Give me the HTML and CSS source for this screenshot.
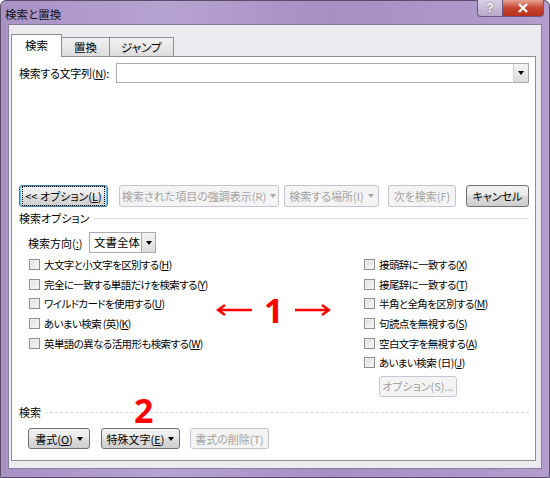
FILE: index.html
```html
<!DOCTYPE html>
<html lang="ja">
<head>
<meta charset="utf-8">
<link rel="stylesheet" href="styles.css">
</head>
<body>
<div class="window">
  <div class="titlebar">
    <span class="title">検索と置換</span>
    <div class="caps">
      <span class="cap help">?</span>
      <span class="cap close">
        <svg width="14" height="10" viewBox="0 0 14 10"><path d="M3 1 L11 9 M11 1 L3 9" stroke="#fff" stroke-width="2.4" fill="none"/></svg>
      </span>
    </div>
  </div>
  <div class="client">
    <div class="tabs">
      <span class="tab active">検索</span>
      <span class="tab">置換</span>
      <span class="tab">ジャンプ</span>
    </div>
    <div class="panel">
      <div class="find-row">
        <label class="find-label">検索する文字列(<u>N</u>):</label>
        <div class="combo">
          <span class="combo-text"></span>
          <span class="drop"><i class="tri"></i></span>
        </div>
      </div>
      <div class="btn-row">
        <span class="btn default w-opt"><span class="focus">&lt;&lt; オプション(<u>L</u>)</span></span>
        <span class="btn dis w-hl"><span>検索された項目の強調表示(R)</span><i class="tri gray"></i></span>
        <span class="btn dis w-where"><span>検索する場所(I)</span><i class="tri gray"></i></span>
        <span class="btn dis w-next"><span>次を検索(F)</span></span>
        <span class="btn w-cancel"><span>キャンセル</span></span>
      </div>
      <div class="group-head"><span>検索オプション</span><span class="line solid"></span></div>
      <div class="dir-row">
        <span class="dir-label">検索方向(<u>:</u>)</span>
        <div class="select"><span class="select-text">文書全体</span><span class="drop"><i class="tri"></i></span></div>
      </div>
      <div class="opts">
        <div class="col left">
          <div class="cb"><i class="box"></i><span>大文字と小文字を区別する(<u>H</u>)</span></div>
          <div class="cb"><i class="box"></i><span>完全に一致する単語だけを検索する(<u>Y</u>)</span></div>
          <div class="cb"><i class="box"></i><span>ワイルドカードを使用する(<u>U</u>)</span></div>
          <div class="cb"><i class="box"></i><span>あいまい検索 (英)(<u>K</u>)</span></div>
          <div class="cb"><i class="box"></i><span>英単語の異なる活用形も検索する(<u>W</u>)</span></div>
        </div>
        <div class="col right">
          <div class="cb"><i class="box"></i><span>接頭辞に一致する(<u>X</u>)</span></div>
          <div class="cb"><i class="box"></i><span>接尾辞に一致する(<u>T</u>)</span></div>
          <div class="cb"><i class="box"></i><span>半角と全角を区別する(<u>M</u>)</span></div>
          <div class="cb"><i class="box"></i><span>句読点を無視する(<u>S</u>)</span></div>
          <div class="cb"><i class="box"></i><span>空白文字を無視する(<u>A</u>)</span></div>
          <div class="cb"><i class="box"></i><span>あいまい検索 (日)(<u>J</u>)</span></div>
          <span class="btn dis w-sopt"><span>オプション(S)...</span></span>
        </div>
        <div class="note note1">
          <svg width="37" height="12" viewBox="0 0 37 12"><path d="M2 6 H36 M9 1 L2 6 L9 11" stroke="#f00" stroke-width="2.4" fill="none"/></svg>
          <span class="num">1</span>
          <svg width="37" height="12" viewBox="0 0 37 12"><path d="M1 6 H35 M28 1 L35 6 L28 11" stroke="#f00" stroke-width="2.4" fill="none"/></svg>
        </div>
      </div>
      <div class="group-head bottom"><span>検索</span><span class="line dotted"></span></div>
      <div class="btn-row bottom-row">
        <span class="btn w-fmt"><span>書式(<u>O</u>)</span><i class="tri"></i></span>
        <span class="btn w-sp"><span>特殊文字(<u>E</u>)</span><i class="tri"></i></span>
        <span class="btn dis w-del"><span>書式の削除(T)</span></span>
        <span class="num note2">2</span>
      </div>
    </div>
  </div>
</div>
</body>
</html>
```
FILE: styles.css
```css
* { box-sizing: border-box; }
html, body { margin: 0; padding: 0; }
body {
  width: 550px; height: 478px; overflow: hidden;
  font-family: "Noto Sans CJK JP", "Noto Sans", sans-serif;
  font-size: 11px;
  font-feature-settings: "palt";
  color: #000;
}
.window {
  width: 550px; height: 478px;
  background: linear-gradient(90deg, #a892c4 0%, #b7a3d2 30%, #a68fc2 60%, #b29dcd 100%);
  border: 1px solid #5b4c6b;
  border-radius: 6px 6px 0 0;
  display: flex; flex-direction: column;
  padding: 0 7px 8px 7px;
}
.titlebar {
  height: 23px; display: flex; align-items: flex-start;
}
.title { margin: 6px 0 0 -3px; font-size: 11.5px; line-height: 14px; color: #111; }
.caps { margin-left: auto; margin-right: -2px; display: flex; margin-top: -1px; }
.cap { height: 17px; display: flex; align-items: center; justify-content: center; border: 1px solid #6a5a80; border-top: none; }
.help { width: 26px; background: linear-gradient(#d8cfe4, #b8a9cc); color: #fff; font-weight: bold; font-family: "Liberation Sans", sans-serif; font-size: 12px; border-radius: 0 0 0 4px; text-shadow: 0 0 2px #555; }
.close { width: 41px; background: linear-gradient(#e8a397, #c7452e 50%, #b8301b); border-radius: 0 0 4px 0; border-left: none; }
.client {
  flex: 1;
  background: #ecebf0;
  border: 1px solid #8a7d9b;
  padding: 8px 5px 7px 2px;
  display: flex; flex-direction: column;
}
.tabs { display: flex; align-items: flex-end; height: 23px; }
.tab {
  height: 19px; padding: 0 11px; border: 1px solid #8c8f95; border-bottom: none;
  background: linear-gradient(#f2f2f2, #dcdcdc);
  line-height: 18px; margin-left: -1px; font-size: 11.5px;
}
.tab.active { height: 23px; background: #fff; padding: 0 13px; margin-left: 0; line-height: 20px; position: relative; z-index: 1; margin-bottom: -1px; }
.tab:nth-child(2) { padding: 0 12px; }
.panel {
  flex: 1; background: #fff; border: 1px solid #8c8f95;
  padding: 0 6px 0 7px;
}
.find-row { display: flex; align-items: center; margin-top: 6px; height: 20px; }
.find-label { width: 97px; letter-spacing: -0.3px; }
.combo { width: 413px; height: 20px; border: 1px solid #a9abb0; display: flex; }
.combo-text { flex: 1; }
.drop { width: 15px; border-left: 1px solid #c9d7c2; background: linear-gradient(#f4f4f4, #dcdcdc); display: flex; align-items: center; justify-content: center; }
.tri { display: inline-block; width: 0; height: 0; border-left: 3.5px solid transparent; border-right: 3.5px solid transparent; border-top: 4px solid #000; }
.tri.gray { border-top-color: #a6a6a6; }
.btn-row { display: flex; margin-top: 102px; height: 22px; }
.btn {
  height: 22px; display: inline-flex; align-items: center; justify-content: center; gap: 4px;
  border: 1px solid #707070; border-radius: 3px;
  background: linear-gradient(#f2f2f2 0%, #ebebeb 45%, #dddddd 50%, #cfcfcf 100%);
  white-space: nowrap;
}
.btn.dis { border-color: #c9c2d3; background: #f4f4f4; color: #a3a3a3; }
.btn.default { border-color: #3c7fb1; box-shadow: inset 0 0 0 1px #6ec6ee; }
.focus { outline: 1px dotted #000; padding: 1px 2px; }
.w-opt { width: 89px; }
.w-hl { width: 160px; margin-left: 11px; }
.w-where { width: 95px; margin-left: 5px; }
.w-next { width: 68px; margin-left: 9px; }
.w-cancel { width: 63px; margin-left: 10px; }
.group-head { display: flex; align-items: center; height: 14px; margin-top: 4px; }
.group-head .line { flex: 1; margin-left: 5px; height: 0; }
.line.solid { border-top: 1px solid #dcdde0; }
.line.dotted { border-top: 1px dashed #c8e0ea; margin-left: 4px; }
.dir-row { display: flex; align-items: center; height: 21px; margin-top: 7px; padding-left: 9px; }
.dir-label { width: 61px; }
.select { width: 67px; height: 21px; border: 1px solid #a9abb0; display: flex; }
.select-text { flex: 1; padding-left: 4px; line-height: 19px; font-size: 11.5px; }
.select .drop { width: 14px; border-left: 1px solid #a9abb0; }
.opts { display: flex; position: relative; margin-top: 2px; height: 144px; }
.col { display: flex; flex-direction: column; }
.left { padding-left: 10px; width: 345px; }
.cb { height: 19.6px; display: flex; align-items: center; white-space: nowrap; font-size: 10.5px; letter-spacing: -0.6px; }
.box { width: 11px; height: 11px; border: 1px solid #8e8f8f; background: linear-gradient(135deg, #dcdcdc, #fafafa); margin-right: 4px; flex: none; box-shadow: inset 0 0 0 1px #f0f0f0; }
.w-sopt { width: 78px; height: 21px; margin-left: 15px; margin-top: 3px; }
.note { position: absolute; display: flex; align-items: center; }
.note1 { left: 197px; top: 38px; gap: 13px; }
.note1 .num { margin: 0 -2px; }
.num { color: #f00; font-family: "Noto Sans", sans-serif; font-weight: bold; font-size: 34px; line-height: 34px; }
.group-head.bottom { margin-top: 6px; }
.bottom-row { margin-top: 9px; padding-left: 9px; height: 21px; position: relative; }
.bottom-row .btn { height: 21px; }
.w-fmt { width: 62px; }
.w-sp { width: 79px; margin-left: 11px; }
.w-del { width: 79px; margin-left: 10px; }
.note2 { position: absolute; left: 115px; top: -35px; }
u { text-decoration: underline; text-underline-offset: 1px; }
```
